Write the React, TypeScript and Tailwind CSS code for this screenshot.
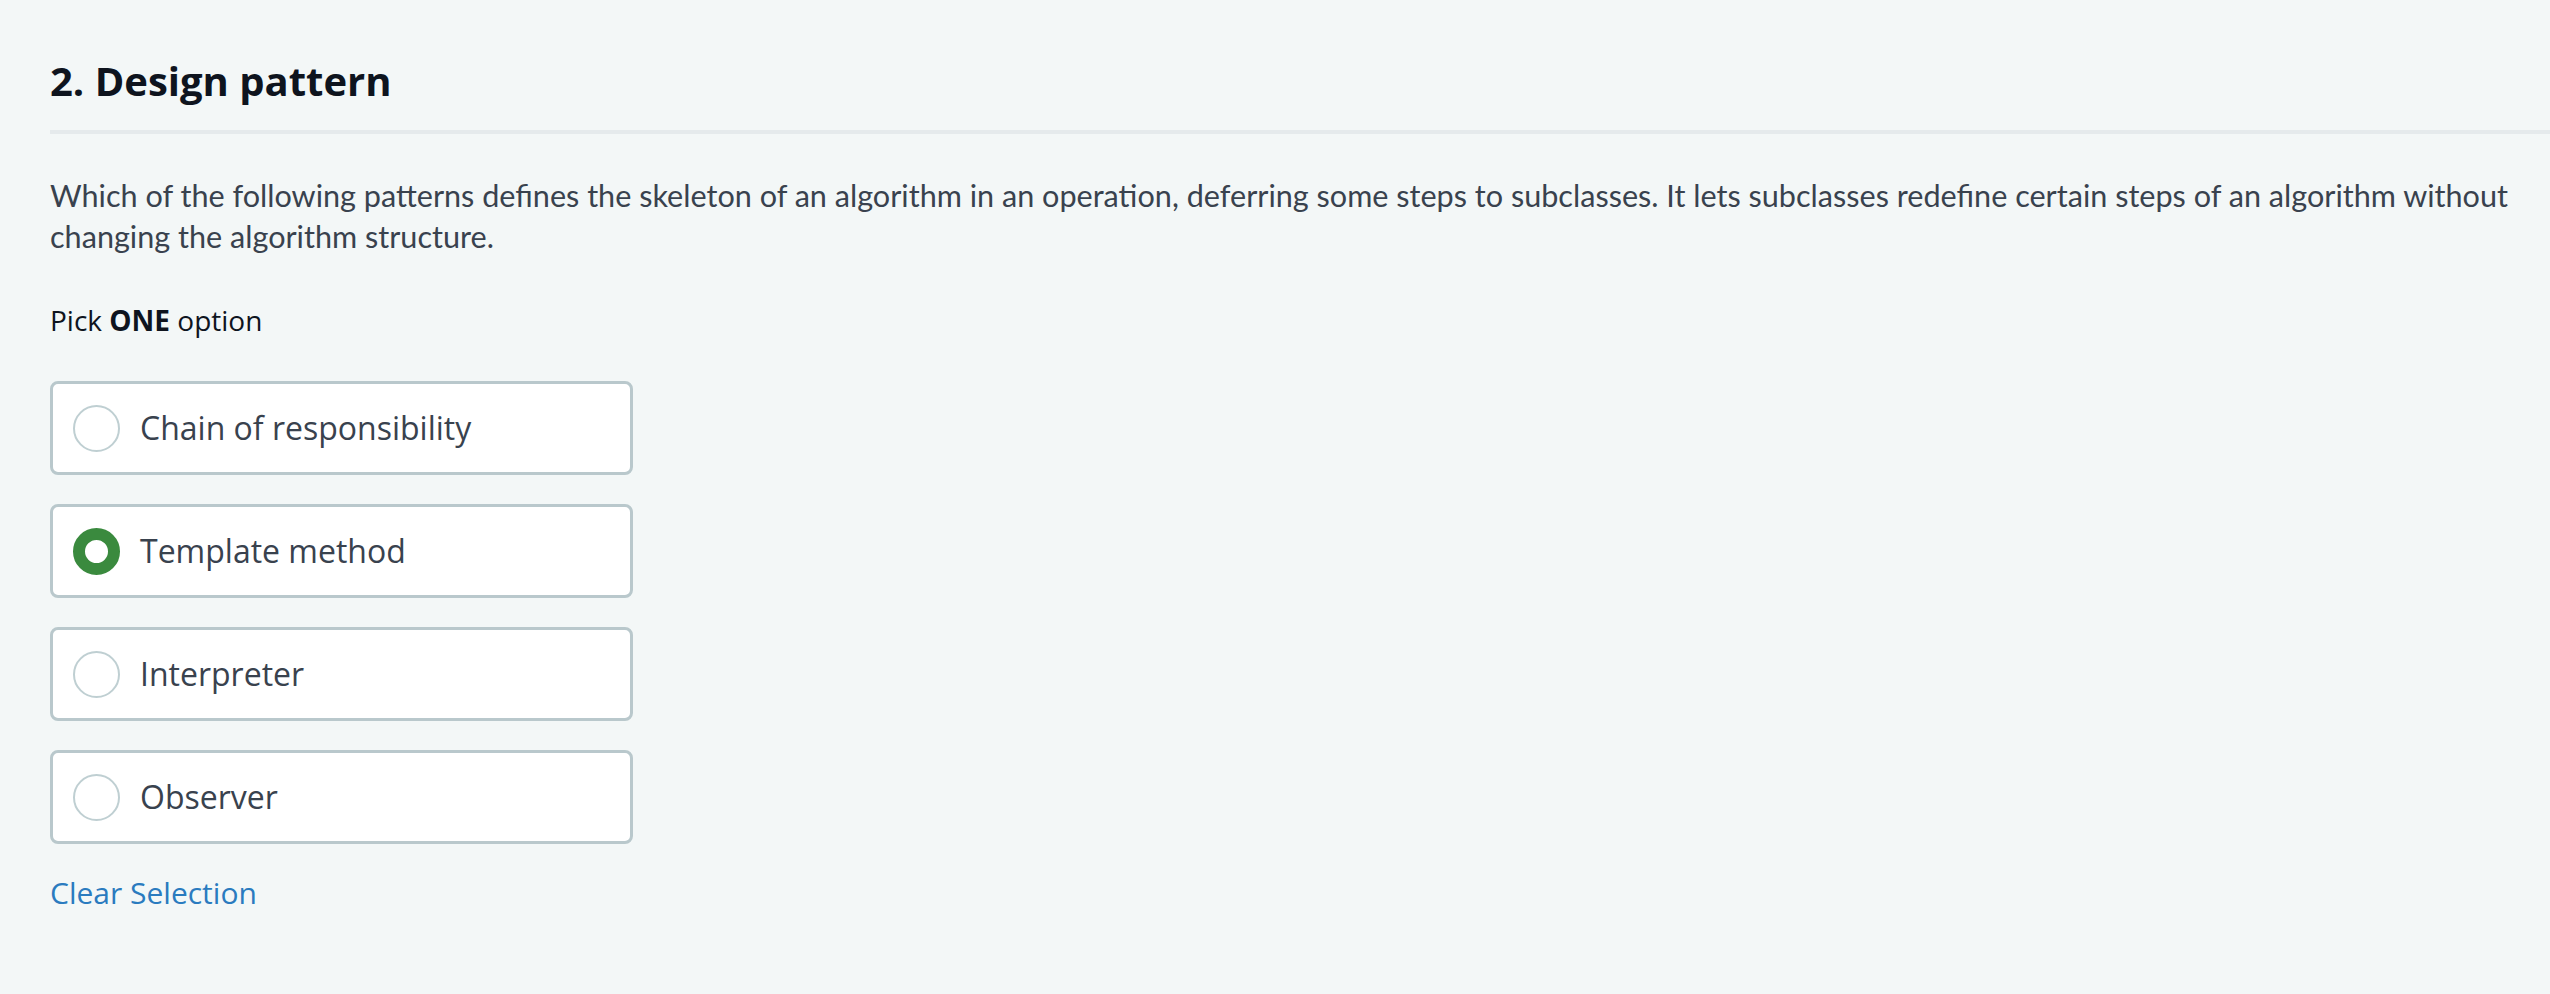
import React from "react";

const options = [
  "Chain of responsibility",
  "Template method",
  "Interpreter",
  "Observer",
];

export default function App() {
  const selected = 1;
  return (
    <div className="min-h-[994px] w-full bg-[#f3f7f7] pl-[50px] pt-[52px]">
      <h2
        className="text-[40px] font-bold leading-[58px] text-[#0e141e]"
        style={{ fontFamily: '"Open Sans", sans-serif' }}
      >
        2. Design pattern
      </h2>
      <div className="mt-[20px] h-[4px] w-full bg-[#e5eaec]" />
      <p
        className="mt-[41px] pr-[30px] text-[30.6px] leading-[41px] text-[#39424e]"
        style={{ fontFamily: 'Lato, sans-serif' }}
      >
        Which of the following patterns defines the skeleton of an algorithm in an operation, deferring some steps to subclasses. It lets subclasses redefine certain steps of an algorithm without changing the algorithm structure.
      </p>
      <div
        className="mt-[43px] text-[28px] leading-[40px] text-[#0e141e]"
        style={{ fontFamily: '"Open Sans", sans-serif' }}
      >
        Pick <span className="font-bold">ONE</span> option
      </div>
      <div className="mt-[41px] flex w-[583px] flex-col gap-[29px]">
        {options.map((o, i) => (
          <div
            key={o}
            className="flex h-[94px] items-center rounded-[8px] border-[3px] border-[#b9c8cc] bg-white pl-[20px]"
          >
            {i === selected ? (
              <div className="h-[47px] w-[47px] shrink-0 rounded-full border-[12px] border-[#3a8a3e] bg-white" />
            ) : (
              <div className="h-[47px] w-[47px] shrink-0 rounded-full border-[2px] border-[#bfcfd2] bg-white" />
            )}
            <span
              className="ml-[20px] text-[32px] text-[#39424e]"
              style={{ fontFamily: '"Open Sans", sans-serif' }}
            >
              {o}
            </span>
          </div>
        ))}
      </div>
      <div
        className="mt-[29px] text-[30px] leading-[40px] text-[#2a7bbf]"
        style={{ fontFamily: '"Open Sans", sans-serif' }}
      >
        Clear Selection
      </div>
    </div>
  );
}
